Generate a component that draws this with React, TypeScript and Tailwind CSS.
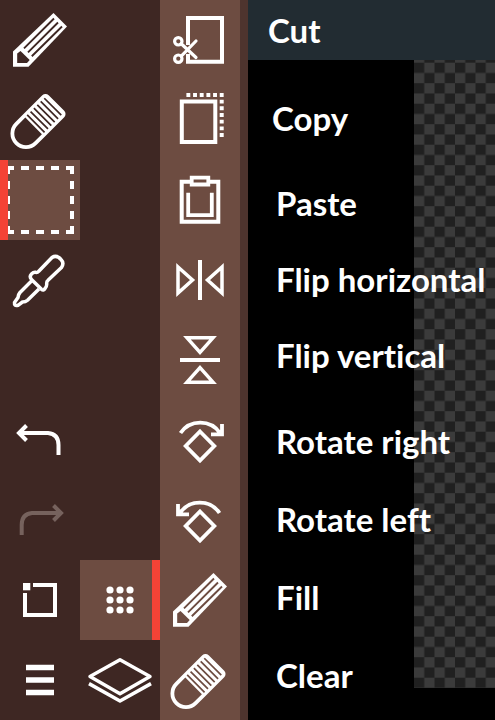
import type { ReactNode } from "react";

type IconProps = { children: ReactNode };

function Icon({ children }: IconProps) {
  return (
    <svg viewBox="0 0 80 80" className="size-20" fill="none" stroke="currentColor" strokeWidth="4" aria-hidden="true">
      {children}
    </svg>
  );
}

const DARK = "#3e2723";
const LIGHT = "#6d4c41";

function PencilIcon({ hole }: { hole: string }) {
  return (
    <Icon>
      <path d="M53.5 13 67 26.5 28.5 66.8H13V51.5Z" fill="currentColor" stroke="none" />
      <path d="M17.2 53.5 20.5 51 29.7 60 27 63H17.2Z" fill={hole} stroke="none" />
      <path d="M24 48.3 54 18.5M28 52.3 58 22.5M31.8 56.2 62 26.5" stroke={hole} strokeWidth="1.9" />
    </Icon>
  );
}

function EraserIcon({ hole }: { hole: string }) {
  return (
    <Icon>
      <g transform="translate(37.5 42) rotate(-45)">
        <path
          d="M-16.3-15.5H22.3a4.5 4.5 0 0 1 4.5 4.5V11a4.5 4.5 0 0 1-4.5 4.5H-16.3a15.5 15.5 0 0 1 0-31Z"
          fill="currentColor"
          stroke="none"
        />
        <path d="M-16.3-11.7H-5.5V11.7H-16.3a11.7 11.7 0 0 1 0-23.4Z" fill={hole} stroke="none" />
        <path
          d="M-2.3-12.3v24.6M2.5-12.3v24.6M7.2-12.3v24.6M12-12.3v24.6M16.8-12.3v24.6M21.6-12v24"
          stroke={hole}
          strokeWidth="1.7"
        />
      </g>
    </Icon>
  );
}

const icons = {
  marquee: (
    <Icon>
      <path d="M6 8H74M6 72H74M8 6V74M72 6V74" strokeDasharray="8 7" />
    </Icon>
  ),
  dropper: (
    <Icon>
      <g strokeWidth="3.5" strokeLinejoin="round">
        <path d="M52 17.5 38.5 31.5Q37.5 32.7 35.5 32.3 33.5 32 31.5 34 29 36.5 31.5 39.5L41.5 49.3Q43.5 51 45 48.5 47 46.5 46.7 43.5 46.5 41.5 48 40.3L61.5 27.5Q64.5 23 61 19.5 56.5 14.5 52 17.5Z" />
        <path d="M31.5 41 20 52.5Q18.3 54.5 18 57.5L14.5 62.5Q14 66.5 18 65.3L22.5 62Q25.5 62 27.5 60.2L39 49" />
      </g>
    </Icon>
  ),
  undo: (
    <Icon>
      <path d="M19 33H48Q58.5 34 58.5 45V55M26.5 25.5 19 33 26.5 40.5" />
    </Icon>
  ),
  redo: (
    <Icon>
      <path d="M61 33H32Q21.7 34 21.7 45V55M53.5 25.5 61 33 53.5 40.5" />
    </Icon>
  ),
  resize: (
    <Icon>
      <path d="M33 25H55V55H25V33" />
      <path d="M23 23h7.3v7.3H23Z" fill="currentColor" stroke="none" />
    </Icon>
  ),
  dots: (
    <Icon>
      <path d="M30 30h.01M40 30h.01M50 30h.01M30 40h.01M40 40h.01M50 40h.01M30 50h.01M40 50h.01M50 50h.01" strokeWidth="7.2" strokeLinecap="round" />
    </Icon>
  ),
  menu: (
    <Icon>
      <path d="M26 27.5H54M26 40H54M26 52.5H54" strokeWidth="5.6" />
    </Icon>
  ),
  layers: (
    <Icon>
      <path d="M40 19.8 70 36.5 40 53.7 10 36.5ZM9 43.6 40 61 71 43.6" strokeWidth="3.5" strokeLinejoin="round" />
    </Icon>
  ),
  cut: (
    <Icon>
      <path d="M28 45V18H62V61.7H28V54" />
      <g strokeWidth="3.2" strokeLinecap="round">
        <circle cx="18.3" cy="41.3" r="3.7" />
        <circle cx="18.3" cy="58.7" r="3.7" />
        <path d="M21.5 44 36 57.5M21.5 55.8 36 41" />
      </g>
    </Icon>
  ),
  copy: (
    <Icon>
      <path d="M21.8 21.5H55.3V62H21.8Z" />
      <path d="M26.4 15H64" strokeDasharray="3.9 2.77" />
      <path d="M61.7 19.7V57" strokeDasharray="3.9 2.77" />
    </Icon>
  ),
  paste: (
    <Icon>
      <path d="M30 21.7H21.7V61.8H58.3V21.7H50" />
      <path d="M31.7 17.7H48.3V24.5H31.7ZM28.2 32.7V55.2H51.8V32.7" strokeWidth="3.8" />
    </Icon>
  ),
  flipH: (
    <Icon>
      <path d="M40 20V60" />
      <path d="M18 27 32.5 40 18 53ZM62 27 47.5 40 62 53Z" strokeWidth="3.5" />
    </Icon>
  ),
  flipV: (
    <Icon>
      <path d="M20 40H60" />
      <path d="M27 17.8H53L40 32.3ZM27 62.2H53L40 47.7Z" strokeWidth="3.5" />
    </Icon>
  ),
  rotateRight: (
    <Icon>
      <path d="M20.5 33A24 24 0 0 1 60 33M62 24V34.3H51M40 31.5 54.3 46 40 60.5 25.7 46Z" strokeWidth="3.8" />
    </Icon>
  ),
  rotateLeft: (
    <Icon>
      <path d="M59.5 33A24 24 0 0 0 20 33M18 24V34.3H29M40 31.5 54.3 46 40 60.5 25.7 46Z" strokeWidth="3.8" />
    </Icon>
  ),
};

type Tool = { label: string; icon: ReactNode; place: string };

const tools: Tool[] = [
  { label: "Pencil", icon: <PencilIcon hole={DARK} />, place: "col-start-1" },
  { label: "Eraser", icon: <EraserIcon hole={DARK} />, place: "col-start-1" },
  { label: "Select", icon: icons.marquee, place: "col-start-1 bg-[#6d4c41] relative before:absolute before:inset-y-0 before:left-0 before:w-2 before:bg-[#f44336]" },
  { label: "Pick colour", icon: icons.dropper, place: "col-start-1" },
  { label: "Undo", icon: icons.undo, place: "col-start-1 row-start-6" },
  { label: "Redo", icon: icons.redo, place: "col-start-1 row-start-7 text-[#76625d]" },
  { label: "Resize", icon: icons.resize, place: "col-start-1 row-start-8" },
  { label: "More", icon: icons.dots, place: "col-start-2 row-start-8 bg-[#6d4c41] relative before:absolute before:inset-y-0 before:right-0 before:w-2 before:bg-[#f44336]" },
  { label: "Menu", icon: icons.menu, place: "col-start-1 row-start-9" },
  { label: "Layers", icon: icons.layers, place: "col-start-2 row-start-9" },
];

const actions = [
  { label: "Cut", icon: icons.cut },
  { label: "Copy", icon: icons.copy },
  { label: "Paste", icon: icons.paste },
  { label: "Flip horizontal", icon: icons.flipH },
  { label: "Flip vertical", icon: icons.flipV },
  { label: "Rotate right", icon: icons.rotateRight },
  { label: "Rotate left", icon: icons.rotateLeft },
  { label: "Fill", icon: <PencilIcon hole={LIGHT} /> },
  { label: "Clear", icon: <EraserIcon hole={LIGHT} /> },
];

function Checkerboard() {
  return (
    <svg className="absolute top-0 right-0 left-[166px] h-[628px] w-[calc(100%-166px)]" aria-hidden="true">
      <defs>
        <pattern id="checks" width="20.5" height="20.5" y="2.7" patternUnits="userSpaceOnUse">
          <rect width="20.5" height="20.5" fill="#3b3b3b" />
          <path d="M0 0h10.25v10.25H0zM10.25 10.25h10.25v10.25H10.25z" fill="#202020" />
        </pattern>
      </defs>
      <rect width="100%" height="100%" fill="url(#checks)" />
    </svg>
  );
}

export default function App() {
  return (
    <main className="flex min-h-screen overflow-hidden bg-black font-['Lato',sans-serif] text-white">
      <nav aria-label="Tools" className="grid shrink-0 auto-rows-[80px] grid-cols-[80px_80px] content-start bg-[#3e2723]">
        {tools.map((tool) => (
          <button key={tool.label} type="button" aria-label={tool.label} className={tool.place}>
            {tool.icon}
          </button>
        ))}
      </nav>

      <div role="toolbar" aria-label="Selection actions" className="flex shrink-0 flex-col border-r-8 border-[#4e342e] bg-[#6d4c41]">
        {actions.map((action) => (
          <button key={action.label} type="button" aria-label={action.label} className="size-20">
            {action.icon}
          </button>
        ))}
      </div>

      <section className="min-w-0 flex-1 text-[33px] leading-10 font-bold whitespace-nowrap [font-variant-ligatures:none]">
        <h1 className="flex h-[60px] items-center bg-[#222c32] pl-5">Cut</h1>
        <div className="relative pt-5">
          <Checkerboard />
          <ul className="relative flex flex-col gap-[9px]">
            <li className="flex h-[76px] items-center pl-6">Copy</li>
            <li>
              <ul className="pl-7">
                <li className="flex h-[76px] items-center">Paste</li>
                <li className="flex h-[76px] items-center">Flip horizontal</li>
                <li className="flex h-[76px] items-center">Flip vertical</li>
              </ul>
            </li>
            <li>
              <ul className="pl-7">
                <li className="flex h-[78px] items-center">Rotate right</li>
                <li className="flex h-[78px] items-center">Rotate left</li>
                <li className="flex h-[78px] items-center">Fill</li>
                <li className="flex h-[78px] items-center">Clear</li>
              </ul>
            </li>
          </ul>
        </div>
      </section>
    </main>
  );
}
